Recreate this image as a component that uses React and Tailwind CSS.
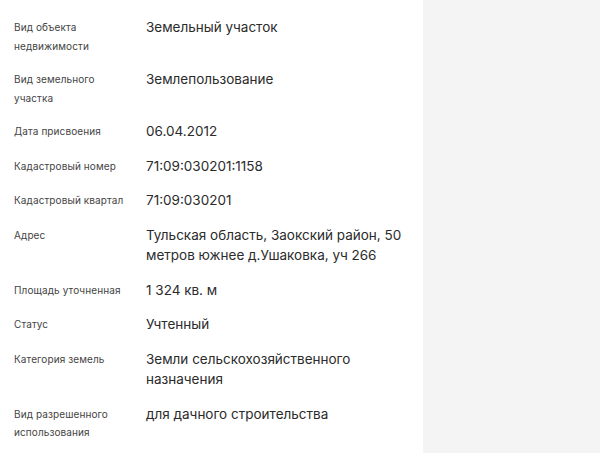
import React from 'react';

const rows = [
    { label: 'Вид объекта недвижимости', value: 'Земельный участок' },
    { label: 'Вид земельного участка', value: 'Землепользование' },
    { label: 'Дата присвоения', value: '06.04.2012' },
    { label: 'Кадастровый номер', value: '71:09:030201:1158' },
    { label: 'Кадастровый квартал', value: '71:09:030201' },
    { label: 'Адрес', value: 'Тульская область, Заокский район, 50 метров южнее д.Ушаковка, уч 266' },
    { label: 'Площадь уточненная', value: '1 324 кв. м' },
    { label: 'Статус', value: 'Учтенный' },
    { label: 'Категория земель', value: 'Земли сельскохозяйственного назначения' },
    { label: 'Вид разрешенного использования', value: 'для дачного строительства' },
];

const App = () => {
    return (
        <div className="flex w-[600px] h-[453px] bg-white font-['Inter','Liberation_Sans',sans-serif] overflow-hidden">
            <div className="w-[423px] shrink-0 pl-[14px] pr-[12px] pt-[17px]">
                <div className="flex flex-col gap-[14px]">
                    {rows.map(row => (
                        <div key={row.label} className="flex items-start gap-[14px]">
                            <div className="w-[118px] shrink-0 text-[10px] leading-[18.5px] tracking-[0.1px] text-[#444] pt-[1px]">
                                {row.label}
                            </div>
                            <div className="flex-1 text-[13.5px] leading-[20.5px] text-[#2b2b2b]">
                                {row.value}
                            </div>
                        </div>
                    ))}
                </div>
            </div>
            <div className="flex-1 bg-[#f4f4f4]" />
        </div>
    );
};

export default App;
